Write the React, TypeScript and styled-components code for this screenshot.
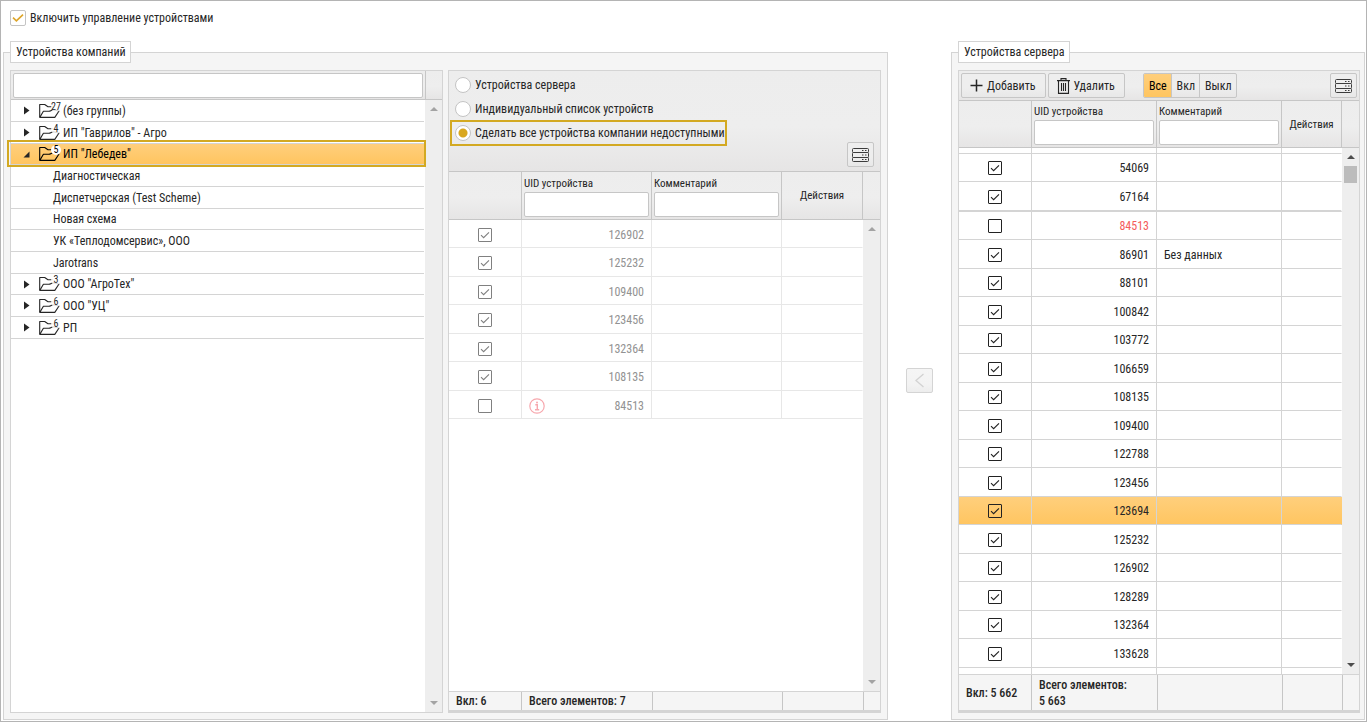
import React, { useState } from "react";
import styled, { createGlobalStyle, css } from "styled-components";

const line = "#d4d4d4";
const strongLine = "#c6c6c6";
const gold = "#d3a922";
const barFill = "linear-gradient(#ededed, #eeeeee 55%, #e6e5e5)";
const selectedFill = "linear-gradient(#ffcf7c, #ffc560)";

const GlobalStyle = createGlobalStyle`
  *, *::before, *::after { box-sizing: border-box; }
  body { margin: 0; background: #fff; }
  body, button, input {
    font-family: "Roboto Condensed", Roboto, "Liberation Sans", sans-serif;
    font-size: 12px;
    line-height: 16px;
    color: #262626;
  }
`;

const Page = styled.main`
  display: flex;
  flex-direction: column;
  min-height: 100vh;
  padding: 0 1px 1px 2px;
  border: 1px solid #b4b4b4;
`;

const EnableRow = styled.label`
  display: flex;
  align-items: center;
  gap: 4px;
  align-self: flex-start;
  margin: 9px 0 15px 7px;
`;

const Columns = styled.div`
  display: grid;
  grid-template-columns: 885fr 63px 414fr;
  flex: 1;
`;

const Group = styled.fieldset<{ $side: number }>`
  display: flex;
  gap: 5px;
  min-width: 0;
  margin: 0;
  padding: 7px ${(p) => p.$side}px 6px 6px;
  border: 1px solid ${line};
  background: #f5f5f5;
`;

const GroupTitle = styled.legend`
  padding: 2px 4px 2px 5px;
  border: 1px solid ${line};
  background: #fff;
`;

const Panel = styled.section`
  display: flex;
  flex-direction: column;
  flex: 1 1 0;
  min-width: 0;
  border: 1px solid ${line};
  background: #fff;
`;

const PanelMain = styled.div`
  display: flex;
  flex: 1;
  min-height: 0;
`;

const Content = styled.div`
  flex: 1;
  min-width: 0;
`;

const ClippedContent = styled(Content)`
  contain: size;
  overflow: hidden;
`;

const TextField = styled.input.attrs({ type: "text" })`
  display: block;
  width: 100%;
  height: 25px;
  padding: 0 4px;
  border: 1px solid ${strongLine};
  border-radius: 2px;
  background: #fff;
  outline: none;
`;

const SearchBar = styled.div`
  height: 29px;
  padding: 2px 2px 1px;
  border-bottom: 1px solid ${strongLine};
  background: ${barFill};
`;

/* Scroll bar */

const ScrollColumn = styled.div`
  display: flex;
  flex-direction: column;
  flex: none;
  width: 17px;
`;

const ScrollHead = styled.div<{ $height: number; $divided?: boolean }>`
  flex: none;
  height: ${(p) => p.$height}px;
  border-bottom: 1px solid ${strongLine};
  ${(p) => p.$divided && `border-left: 1px solid ${strongLine};`}
  background: ${barFill};
`;

const Track = styled.div<{ $off?: boolean }>`
  display: flex;
  flex: 1;
  flex-direction: column;
  align-items: center;
  background: #eee;
  color: ${(p) => (p.$off ? "#a3a3a3" : "#4d4d4d")};
`;

const ScrollButton = styled.button`
  display: grid;
  place-items: center;
  width: 17px;
  height: 18px;
  padding: 0;
  border: 0;
  background: none;
  color: inherit;
`;

const Thumb = styled.div`
  width: 13px;
  height: 17px;
  background: #bcbcbc;
`;

const Spacer = styled.div`
  flex: 1;
`;

/* Company tree */

const Tree = styled.ul`
  margin: 0;
  padding: 0 1px 0 0;
  list-style: none;
`;

const TreeRow = styled.li<{ $leaf?: boolean; $selected?: boolean }>`
  position: relative;
  display: flex;
  align-items: center;
  height: 22px;
  padding-left: ${(p) => (p.$leaf ? 42 : 12)}px;
  border-bottom: 1px solid ${line};
  &:nth-child(3n) { height: 21px; }
  ${(p) =>
    p.$selected &&
    css`
      background: ${selectedFill};
      color: #000;
      &::after {
        content: "";
        position: absolute;
        inset: -4px -2px -3px -4px;
        border: 2px solid ${gold};
      }
    `}
`;

const Toggle = styled.button`
  display: grid;
  place-items: center;
  width: 7px;
  height: 9px;
  margin-right: 9px;
  padding: 0;
  border: 0;
  background: none;
`;

const FolderBox = styled.span`
  position: relative;
  display: flex;
  width: 24px;
`;

const Badge = styled.span<{ $selected?: boolean }>`
  position: absolute;
  top: -1px;
  right: 2px;
  height: 10px;
  min-width: 10px;
  border-radius: 5px;
  background: ${(p) => (p.$selected ? "#fff" : "#ffffffd0")};
  font-size: 10px;
  line-height: 10px;
  text-align: center;
`;

/* Toolbars */

const ModeBar = styled.div`
  display: flex;
  justify-content: space-between;
  height: 101px;
  padding: 2px 6px 4px 1px;
  border-bottom: 1px solid ${strongLine};
  background: ${barFill};
`;

const ModeList = styled.div`
  display: flex;
  flex-direction: column;
  align-items: flex-start;
`;

const ModeOption = styled.label<{ $marked?: boolean }>`
  display: flex;
  align-items: center;
  gap: 4px;
  height: ${(p) => (p.$marked ? 26 : 24)}px;
  margin-top: ${(p) => (p.$marked ? -1 : 0)}px;
  padding: 0 0 0 3px;
  border: 2px solid ${(p) => (p.$marked ? gold : "transparent")};
`;

const Radio = styled.input.attrs({ type: "radio" })`
  appearance: none;
  width: 16px;
  height: 16px;
  margin: 0;
  border: 1px solid #c4c4c4;
  border-radius: 50%;
  background: #fff;
  &:checked {
    background: radial-gradient(circle, #d9a71f 4px, #fff 5px);
  }
`;

const Toolbar = styled.div`
  display: flex;
  align-items: center;
  gap: 2px;
  height: 30px;
  padding: 0 2px;
  border-bottom: 1px solid ${strongLine};
  background: ${barFill};
`;

const ToolButton = styled.button`
  display: flex;
  align-items: center;
  gap: 4px;
  height: 25px;
  padding: 0 9px 0 8px;
  border: 1px solid ${strongLine};
  border-radius: 2px;
  background: linear-gradient(#eee, #eee 60%, #e8e8e8);
`;

const SquareButton = styled(ToolButton)`
  flex: none;
  justify-content: center;
  width: 27px;
  padding: 0;
  &:disabled {
    border-color: ${line};
    background: linear-gradient(#f5f5f5, #f3f3f3 65%, #ededed);
    color: #d2d2d2;
  }
`;

const BottomButton = styled(SquareButton)`
  align-self: flex-end;
`;

const PushedButton = styled(SquareButton)`
  margin-left: auto;
`;

const Segments = styled.div`
  display: flex;
  height: 25px;
  margin-left: 16px;
  border: 1px solid ${strongLine};
  border-radius: 2px;
  overflow: hidden;
`;

const Segment = styled.button<{ $active?: boolean }>`
  padding: 0 4px 0 5px;
  border: 0;
  background: ${(p) => (p.$active ? selectedFill : "transparent")};
  color: ${(p) => (p.$active ? "#000" : "inherit")};
  & + & { border-left: 1px solid ${strongLine}; }
`;

/* Device table */

const Table = styled.table`
  width: 100%;
  table-layout: fixed;
  border-collapse: separate;
  border-spacing: 0;
`;

const Col = styled.col<{ $width: number }>`
  width: ${(p) => p.$width}px;
`;

const HeadCell = styled.th<{ $height: number; $center?: boolean }>`
  height: ${(p) => p.$height}px;
  padding: ${(p) => (p.$center ? "1px 2px 0" : "0 2px 2px")};
  border-right: 1px solid ${strongLine};
  border-bottom: 1px solid ${strongLine};
  background: ${barFill};
  font-size: 11px;
  font-weight: 400;
  text-align: ${(p) => (p.$center ? "center" : "left")};
  vertical-align: ${(p) => (p.$center ? "middle" : "bottom")};
`;

const HeadLabel = styled.label`
  display: block;
  line-height: 17px;
`;

const BodyRow = styled.tr<{ $dim?: boolean; $selected?: boolean; $alert?: boolean; $thick?: boolean }>`
  height: 28px;
  &:nth-child(even) { height: ${(p) => (p.$thick ? 30 : 29)}px; }
  color: ${(p) => (p.$dim ? "#929292" : "inherit")};
  ${(p) => p.$selected && `background: ${selectedFill};`}
  td {
    padding: ${(p) => (p.$dim ? 2 : 1)}px 7px 0;
    border-right: 1px solid ${(p) => (p.$dim ? "#e7e7e7" : line)};
    border-bottom: ${(p) => (p.$thick ? 2 : 1)}px solid ${(p) => (p.$dim ? "#e7e7e7" : line)};
  }
  td:last-child { border-right-color: transparent; }
  td:nth-child(2) { ${(p) => p.$alert && "color: #f45b5b;"} }
`;

const CutRow = styled.tr<{ $height: number }>`
  height: ${(p) => p.$height}px;
  td {
    padding: 0;
    border-right: 1px solid ${line};
    border-bottom: 1px solid ${line};
  }
  td:last-child { border-right-color: transparent; }
`;

const UidCell = styled.div`
  display: flex;
  align-items: center;
  justify-content: space-between;
`;

const UidText = styled.span`
  margin-left: auto;
`;

const Footer = styled.div<{ $columns: string; $height: number }>`
  display: grid;
  grid-template-columns: ${(p) => p.$columns};
  align-items: stretch;
  height: ${(p) => p.$height}px;
  border-top: 1px solid ${line};
  border-bottom: 2px solid ${line};
  background: #f5f5f5;
  font-weight: 500;
`;

const FooterCell = styled.div`
  display: flex;
  align-items: center;
  padding: 0 7px;
  & + & { border-left: 1px solid ${strongLine}; }
`;

const Middle = styled.div`
  display: grid;
  place-items: center;
`;

/* Tick boxes */

const CheckBox = styled.span<{ $dim?: boolean }>`
  display: inline-grid;
  vertical-align: middle;
  color: ${(p) => (p.$dim ? "#808080" : "#222")};
  & > * { grid-area: 1 / 1; }
  & > svg { pointer-events: none; visibility: hidden; }
  & > input:checked + svg { visibility: visible; }
`;

const CheckInput = styled.input.attrs({ type: "checkbox" })<{ $large?: boolean }>`
  appearance: none;
  width: ${(p) => (p.$large ? 16 : 14)}px;
  height: ${(p) => (p.$large ? 16 : 14)}px;
  margin: 0;
  border: 1px solid ${(p) => (p.$large ? "#c4c4c4" : "currentColor")};
  border-radius: ${(p) => (p.$large ? 2 : 1)}px;
  color: inherit;
`;

const RowCheckWrap = styled.div`
  display: flex;
  justify-content: center;
`;

function RowCheck({ on, dim, name }: { on: boolean; dim?: boolean; name: string }) {
  const [checked, setChecked] = useState(on);
  return (
    <RowCheckWrap>
      <CheckBox $dim={dim}>
        <CheckInput
          aria-label={name}
          checked={checked}
          disabled={dim}
          onChange={(e) => setChecked(e.target.checked)}
        />
        <svg width="14" height="14" fill="none" stroke="currentColor" strokeWidth="1.1">
          <path d="M3 7.2l2.6 2.5L11 4.3" />
        </svg>
      </CheckBox>
    </RowCheckWrap>
  );
}

/* Icons */

const FolderIcon = () => (
  <svg width="21" height="16" fill="none" stroke="currentColor" strokeWidth="1.1" strokeLinejoin="round">
    <path d="M.7 14V1.500h5l3.300 2.200h4.500" />
    <path d="M.8 14.400l3.600-6.200h5.200c2.200 0 2.900-1.400 4.400-1.400l6 1.200-4.200 6.400z" />
  </svg>
);

const Caret = ({ open }: { open?: boolean }) => (
  <svg width="7" height="9" fill="currentColor">
    <path d={open ? "M6.500 1.500v6H.5z" : "M1 .5v8l5.500-4z"} />
  </svg>
);

const Arrow = ({ down }: { down?: boolean }) => (
  <svg width="8" height="4" fill="currentColor">
    <path d={down ? "M0 0h8L4 4z" : "M0 4h8L4 0z"} />
  </svg>
);

const ServerIcon = () => (
  <svg width="17" height="16" fill="none" stroke="#3c3c3c" strokeWidth="1">
    <rect x=".5" y="1.500" width="16" height="4" rx="1" />
    <rect x=".5" y="5.500" width="16" height="5" rx="1" />
    <rect x=".5" y="10.500" width="16" height="4" rx="1" />
    <path d="M10 3.500h1.500M13 3.500h1.500M10 8h1.500M13 8h1.500M10 12.500h1.500M13 12.500h1.500" />
  </svg>
);

const PlusIcon = () => (
  <svg width="13" height="13" stroke="currentColor" strokeWidth="1.500">
    <path d="M6.500 .5v12M.5 6.500h12" />
  </svg>
);

const TrashIcon = () => (
  <svg width="13" height="16" fill="none" stroke="currentColor" strokeWidth="1.100">
    <path d="M0 2.600h13M4 2.500V.6h5v1.900M1.500 2.600v12.800h10V2.600M4.500 5v8M6.500 5v8M8.500 5v8" />
  </svg>
);

const InfoIcon = () => (
  <svg width="16" height="16" fill="none" stroke="#f7a8ae" strokeWidth="1.200">
    <circle cx="8" cy="8" r="7.200" />
    <path d="M6.300 6.800H8.300V11.500M6 11.700h4.200" strokeWidth="1.400" />
    <circle cx="8" cy="4.400" r="1" fill="#f7a8ae" stroke="none" />
  </svg>
);

const BackIcon = () => (
  <svg width="11" height="15" fill="none" stroke="currentColor" strokeWidth="1.300">
    <path d="M9.500 1L2 7.500l7.500 6.500" />
  </svg>
);

/* Data */

type Node = { name: string; count?: number; open?: boolean; selected?: boolean };

const nodes: Node[] = [
  { name: "(без группы)", count: 27 },
  { name: 'ИП "Гаврилов" - Агро', count: 4 },
  { name: 'ИП "Лебедев"', count: 5, open: true, selected: true },
  { name: "Диагностическая" },
  { name: "Диспетчерская (Test Scheme)" },
  { name: "Новая схема" },
  { name: "УК «Теплодомсервис», ООО" },
  { name: "Jarotrans" },
  { name: 'ООО "АгроТех"', count: 3 },
  { name: 'ООО "УЦ"', count: 6 },
  { name: "РП", count: 6 },
];

const modes = [
  "Устройства сервера",
  "Индивидуальный список устройств",
  "Сделать все устройства компании недоступными",
];

type Device = {
  uid: string;
  off?: boolean;
  note?: string;
  info?: boolean;
  selected?: boolean;
  alert?: boolean;
  thick?: boolean;
};

const companyDevices: Device[] = [
  { uid: "126902" },
  { uid: "125232" },
  { uid: "109400" },
  { uid: "123456" },
  { uid: "132364" },
  { uid: "108135" },
  { uid: "84513", off: true, info: true },
];

const serverDevices: Device[] = [
  { uid: "54069" },
  { uid: "67164", thick: true },
  { uid: "84513", off: true, alert: true },
  { uid: "86901", note: "Без данных" },
  { uid: "88101" },
  { uid: "100842" },
  { uid: "103772" },
  { uid: "106659" },
  { uid: "108135" },
  { uid: "109400" },
  { uid: "122788" },
  { uid: "123456" },
  { uid: "123694", selected: true },
  { uid: "125232" },
  { uid: "126902" },
  { uid: "128289" },
  { uid: "132364" },
  { uid: "133628" },
];

type DeviceTableProps = {
  id: string;
  devices: Device[];
  widths: number[];
  headHeight: number;
  dim?: boolean;
  cut?: boolean;
};

function DeviceTable({ id, devices, widths, headHeight, dim, cut }: DeviceTableProps) {
  const cutCells = (
    <>
      <td />
      <td />
      <td />
      <td />
    </>
  );
  return (
    <Table>
      <colgroup>
        {widths.map((w, i) => (
          <Col key={i} $width={w} />
        ))}
        <col />
      </colgroup>
      <thead>
        <tr>
          <HeadCell $height={headHeight} />
          <HeadCell $height={headHeight}>
            <HeadLabel htmlFor={`${id}-uid`}>UID устройства</HeadLabel>
            <TextField id={`${id}-uid`} />
          </HeadCell>
          <HeadCell $height={headHeight}>
            <HeadLabel htmlFor={`${id}-note`}>Комментарий</HeadLabel>
            <TextField id={`${id}-note`} />
          </HeadCell>
          <HeadCell $height={headHeight} $center>
            Действия
          </HeadCell>
        </tr>
      </thead>
      {cut && (
        <tbody>
          <CutRow $height={6}>{cutCells}</CutRow>
        </tbody>
      )}
      <tbody>
        {devices.map((d) => (
          <BodyRow key={d.uid} $dim={dim} $selected={d.selected} $alert={d.alert} $thick={d.thick}>
            <td>
              <RowCheck on={!d.off} dim={dim} name={d.uid} />
            </td>
            <td>
              <UidCell>
                {d.info && <InfoIcon />}
                <UidText>{d.uid}</UidText>
              </UidCell>
            </td>
            <td>{d.note}</td>
            <td />
          </BodyRow>
        ))}
      </tbody>
      {cut && (
        <tbody>
          <CutRow $height={28}>{cutCells}</CutRow>
        </tbody>
      )}
    </Table>
  );
}

function ScrollBar({ head, divided, off }: { head: number; divided?: boolean; off?: boolean }) {
  return (
    <ScrollColumn>
      <ScrollHead $height={head} $divided={divided} />
      <Track $off={off}>
        <ScrollButton disabled={off} aria-label="Вверх">
          <Arrow />
        </ScrollButton>
        {!off && <Thumb />}
        <Spacer />
        <ScrollButton disabled={off} aria-label="Вниз">
          <Arrow down />
        </ScrollButton>
      </Track>
    </ScrollColumn>
  );
}

export default function App() {
  const [enabled, setEnabled] = useState(true);
  const [mode, setMode] = useState(2);
  const [filter, setFilter] = useState("Все");

  return (
    <>
      <GlobalStyle />
      <Page>
        <EnableRow>
          <CheckBox>
            <CheckInput $large checked={enabled} onChange={(e) => setEnabled(e.target.checked)} />
            <svg width="16" height="16" fill="none" stroke="#dda52a" strokeWidth="1.600">
              <path d="M3 7.700l3.400 3.200L13 4.600" />
            </svg>
          </CheckBox>
          Включить управление устройствами
        </EnableRow>
        <Columns>
          <Group $side={6}>
            <GroupTitle>Устройства компаний</GroupTitle>
            <Panel>
              <PanelMain>
                <Content>
                  <SearchBar>
                    <TextField aria-label="Поиск" />
                  </SearchBar>
                  <Tree>
                    {nodes.map((n) => (
                      <TreeRow key={n.name} $leaf={!n.count} $selected={n.selected}>
                        {n.count && (
                          <>
                            <Toggle aria-label={n.name}>
                              <Caret open={n.open} />
                            </Toggle>
                            <FolderBox>
                              <FolderIcon />
                              <Badge $selected={n.selected}>{n.count}</Badge>
                            </FolderBox>
                          </>
                        )}
                        {n.name}
                      </TreeRow>
                    ))}
                  </Tree>
                </Content>
                <ScrollBar head={29} divided off />
              </PanelMain>
            </Panel>
            <Panel>
              <ModeBar>
                <ModeList>
                  {modes.map((m, i) => (
                    <ModeOption key={m} $marked={i === 2}>
                      <Radio name="mode" checked={mode === i} onChange={() => setMode(i)} />
                      {m}
                    </ModeOption>
                  ))}
                </ModeList>
                <BottomButton aria-label="Список серверов">
                  <ServerIcon />
                </BottomButton>
              </ModeBar>
              <PanelMain>
                <Content>
                  <DeviceTable
                    id="company"
                    devices={companyDevices}
                    widths={[73, 130, 130]}
                    headHeight={48}
                    dim
                  />
                </Content>
                <ScrollBar head={48} off />
              </PanelMain>
              <Footer $columns="72px 131px 130px 1fr 17px" $height={21}>
                <FooterCell>Вкл: 6</FooterCell>
                <FooterCell>Всего элементов: 7</FooterCell>
                <FooterCell />
                <FooterCell />
                <FooterCell />
              </Footer>
            </Panel>
          </Group>
          <Middle>
            <SquareButton disabled aria-label="Перенести">
              <BackIcon />
            </SquareButton>
          </Middle>
          <Group $side={4}>
            <GroupTitle>Устройства сервера</GroupTitle>
            <Panel>
              <Toolbar>
                <ToolButton>
                  <PlusIcon />
                  Добавить
                </ToolButton>
                <ToolButton>
                  <TrashIcon />
                  Удалить
                </ToolButton>
                <Segments>
                  {["Все", "Вкл", "Выкл"].map((s) => (
                    <Segment key={s} $active={filter === s} onClick={() => setFilter(s)}>
                      {s}
                    </Segment>
                  ))}
                </Segments>
                <PushedButton aria-label="Список серверов">
                  <ServerIcon />
                </PushedButton>
              </Toolbar>
              <PanelMain>
                <ClippedContent>
                  <DeviceTable
                    id="server"
                    devices={serverDevices}
                    widths={[73, 125, 125]}
                    headHeight={47}
                    cut
                  />
                </ClippedContent>
                <ScrollBar head={47} />
              </PanelMain>
              <Footer $columns="72px 126px 125px 1fr 17px" $height={38}>
                <FooterCell>{"Вкл: 5\u00a0662"}</FooterCell>
                <FooterCell>{"Всего элементов: 5\u00a0663"}</FooterCell>
                <FooterCell />
                <FooterCell />
                <FooterCell />
              </Footer>
            </Panel>
          </Group>
        </Columns>
      </Page>
    </>
  );
}
